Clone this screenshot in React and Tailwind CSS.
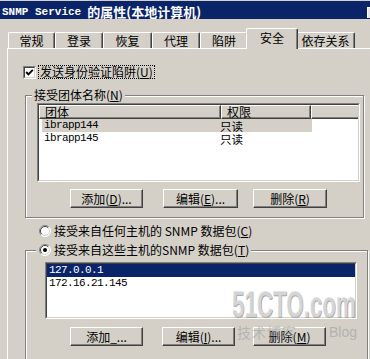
import React from 'react';

const cjk = "font-['Noto_Sans_CJK_SC',sans-serif]";
const mono = "font-['Liberation_Mono','Noto_Sans_CJK_SC',monospace]";

function Btn({ className, children }) {
  return (
    <div className={"h-[19px] border-t border-l border-white border-r border-b border-r-[#404040] border-b-[#404040] " + className}>
      <div className="h-full flex items-center justify-center shadow-[inset_-1px_-1px_0_#808080] leading-[14px] whitespace-nowrap">
        {children}
      </div>
    </div>
  );
}

function Radio({ checked }) {
  return (
    <svg width="12" height="12" viewBox="0 0 12 12" className="shrink-0">
      <circle cx="6" cy="6" r="5.5" fill="#fff" />
      <path d="M2.1 9.9 A5.5 5.5 0 0 1 9.9 2.1" fill="none" stroke="#808080" />
      <path d="M9.9 2.1 A5.5 5.5 0 0 1 2.1 9.9" fill="none" stroke="#fff" />
      <path d="M2.8 9.2 A4.5 4.5 0 0 1 9.2 2.8" fill="none" stroke="#404040" />
      <path d="M9.2 2.8 A4.5 4.5 0 0 1 2.8 9.2" fill="none" stroke="#d4d0c8" />
      {checked && <circle cx="6" cy="6" r="2" fill="#000" />}
    </svg>
  );
}

function Sunken({ className, children }) {
  return (
    <div className={"border-t border-l border-t-[#808080] border-l-[#808080] border-r border-b border-white " + className}>
      <div className="h-full border-t border-l border-t-[#404040] border-l-[#404040] border-r border-b border-r-[#d4d0c8] border-b-[#d4d0c8] bg-white overflow-hidden">
        {children}
      </div>
    </div>
  );
}

const tabs = [
  ['常规', 'w-[47px]'],
  ['登录', 'w-[48px]'],
  ['恢复', 'w-[49px]'],
  ['代理', 'w-[48px]'],
  ['陷阱', 'w-[48px]'],
];

export default function App() {
  return (
    <div className={"w-[370px] h-[359px] overflow-hidden bg-[#d4d0c8] relative text-black text-[12px] " + cjk}>
      {/* title bar */}
      <div className="pt-[1px]">
        <div className="h-[18px] bg-[#0a246a] flex items-start pl-[2px] text-white font-bold whitespace-nowrap">
          <span className={mono + " text-[11px] leading-[14px] mt-[4px]"}>SNMP Service</span>
          <span className={cjk + " ml-[6px] text-[13px] leading-[14px] mt-[4px]"}>的属性(本地计算机)</span>
          <div className="ml-auto mt-[6px] w-[3px] h-[11px] bg-[#e8e6e0] border-l border-t border-white" />
        </div>
      </div>

      {/* tabs */}
      <div className="h-[29px] flex items-end pl-[8px]">
        {tabs.map(([t, w]) => (
          <div key={t} className={"h-[16px] border-t border-l border-white border-r border-r-[#404040] rounded-t-[2px] shadow-[inset_-1px_0_0_#808080] flex items-center justify-center leading-[14px] " + w}>
            {t}
          </div>
        ))}
        <div className="relative z-10 w-[52px] -mx-[2px] h-[21px] -mb-[1px] bg-[#d4d0c8] border-t border-l border-white border-r border-r-[#404040] rounded-t-[2px] shadow-[inset_-1px_0_0_#808080] flex justify-center pt-[2px] leading-[14px]">
          安全
        </div>
        <div className="h-[16px] w-[59px] border-t border-l border-white border-r border-r-[#404040] rounded-t-[2px] shadow-[inset_-1px_0_0_#808080] flex items-center justify-center leading-[14px]">
          依存关系
        </div>
      </div>

      {/* tab panel */}
      <div className="ml-[7px] h-[311px] border-l border-t border-white">
        {/* checkbox */}
        <div className="mt-[16px] ml-[15px] flex items-center h-[14px]">
          <div className="w-[13px] h-[13px] border-t border-l border-t-[#808080] border-l-[#808080] border-r border-b border-white">
            <div className="w-full h-full border-t border-l border-t-[#404040] border-l-[#404040] border-r border-b border-r-[#d4d0c8] border-b-[#d4d0c8] bg-white flex items-center justify-center">
              <svg width="9" height="9" viewBox="0 0 9 9">
                <polyline points="1.2,4 3.4,6.3 7.8,1.8" fill="none" stroke="#000" strokeWidth="1.9" />
              </svg>
            </div>
          </div>
          <div className="ml-[2px] px-[1px] h-[14px] border border-dotted border-black flex items-center leading-[12px]">
            发送身份验证陷阱(<u>U</u>)
          </div>
        </div>

        {/* group 1 */}
        <div className="mt-[16px] ml-[17px] w-[339px] h-[123px] border border-[#808080] shadow-[inset_1px_1px_0_#fff,1px_1px_0_#fff]">
          <div className="-mt-[8px] ml-[6px] w-fit px-[2px] bg-[#d4d0c8] leading-[14px]">
            接受团体名称(<u>N</u>)
          </div>
          <Sunken className="mt-[1px] ml-[11px] w-[323px] h-[79px]">
            <div className="flex h-[14px] bg-[#d4d0c8] leading-[12px]">
              <div className="w-[182px] border-t border-l border-white border-r border-b border-r-[#404040] border-b-[#404040] shadow-[inset_-1px_-1px_0_#808080] pl-[5px]">团体</div>
              <div className="w-[90px] border-t border-l border-white border-r border-b border-r-[#404040] border-b-[#404040] shadow-[inset_-1px_-1px_0_#808080] pl-[5px]">权限</div>
              <div className="flex-1 border-t border-l border-white border-b border-b-[#404040] shadow-[inset_0_-1px_0_#808080]" />
            </div>
            <div className="ml-[3px] w-[270px] h-[13px] flex items-center bg-[#d4d0c8]">
              <div className={"w-[178px] pl-[2px] text-[11px] tracking-[-0.6px] leading-[13px] " + mono}>ibrapp144</div>
              <div className="text-[11.5px] leading-[12px]">只读</div>
            </div>
            <div className="ml-[3px] w-[270px] h-[13px] flex items-center">
              <div className={"w-[178px] pl-[2px] text-[11px] tracking-[-0.6px] leading-[13px] " + mono}>ibrapp145</div>
              <div className="text-[11.5px] leading-[12px]">只读</div>
            </div>
          </Sunken>
          <div className="mt-[7px] ml-[44px] flex">
            <Btn className="w-[73px]">添加(<u>D</u>)...</Btn>
            <Btn className="w-[75px] ml-[20px]">编辑(<u>E</u>)...</Btn>
            <Btn className="w-[74px] ml-[15px]">删除(<u>R</u>)</Btn>
          </div>
        </div>

        {/* radio 1 */}
        <div className="mt-[6px] ml-[31px] h-[14px] flex items-center leading-[14px]">
          <Radio />
          <span className="ml-[3px]">接受来自任何主机的 SNMP 数据包(<u>C</u>)</span>
        </div>

        {/* group 2 */}
        <div className="mt-[12px] ml-[17px] w-[343px] h-[120px] border border-[#808080] shadow-[inset_1px_1px_0_#fff,1px_1px_0_#fff]">
          <div className="-mt-[8px] ml-[10px] w-fit pl-[3px] pr-[2px] h-[14px] bg-[#d4d0c8] flex items-center leading-[14px]">
            <Radio checked />
            <span className="ml-[3px]">接受来自这些主机的SNMP 数据包(<u>T</u>)</span>
          </div>
          <Sunken className="mt-[5px] ml-[19px] w-[312px] h-[57px]">
            <div className="h-[13px] bg-[#0a246a] text-white flex items-center">
              <span className={"pl-[2px] text-[11px] tracking-[-0.6px] leading-[13px] " + mono}>127.0.0.1</span>
            </div>
            <div className="h-[13px] flex items-center">
              <span className={"pl-[2px] text-[11px] tracking-[-0.6px] leading-[13px] " + mono}>172.16.21.145</span>
            </div>
          </Sunken>
          <div className="mt-[8px] ml-[44px] flex">
            <Btn className="w-[73px]">添加_...</Btn>
            <Btn className="w-[73px] ml-[19px]">编辑(<u>I</u>)...</Btn>
            <Btn className="w-[73px] ml-[18px]">删除(<u>M</u>)</Btn>
          </div>
        </div>
      </div>

      {/* watermark */}
      <div className="absolute left-[232px] top-[289px] pointer-events-none select-none">
        <div className="font-['Liberation_Sans',sans-serif] font-bold text-[36px] leading-[32px] origin-left [transform:scaleX(0.62)] whitespace-nowrap text-[#dedede]/85 [text-shadow:1px_1px_0_#a4a4a4]">
          51CTO.com
        </div>
        <div className="flex items-end mt-[4px] ml-[5px]">
          <span className="text-[14px] leading-[15px] text-[#a0a0a0]/60 tracking-[1px]">技术博客</span>
          <span className="ml-[32px] font-['Liberation_Sans',sans-serif] text-[14px] leading-[15px] text-[#aaaaaa]/80">Blog</span>
        </div>
      </div>
    </div>
  );
}
